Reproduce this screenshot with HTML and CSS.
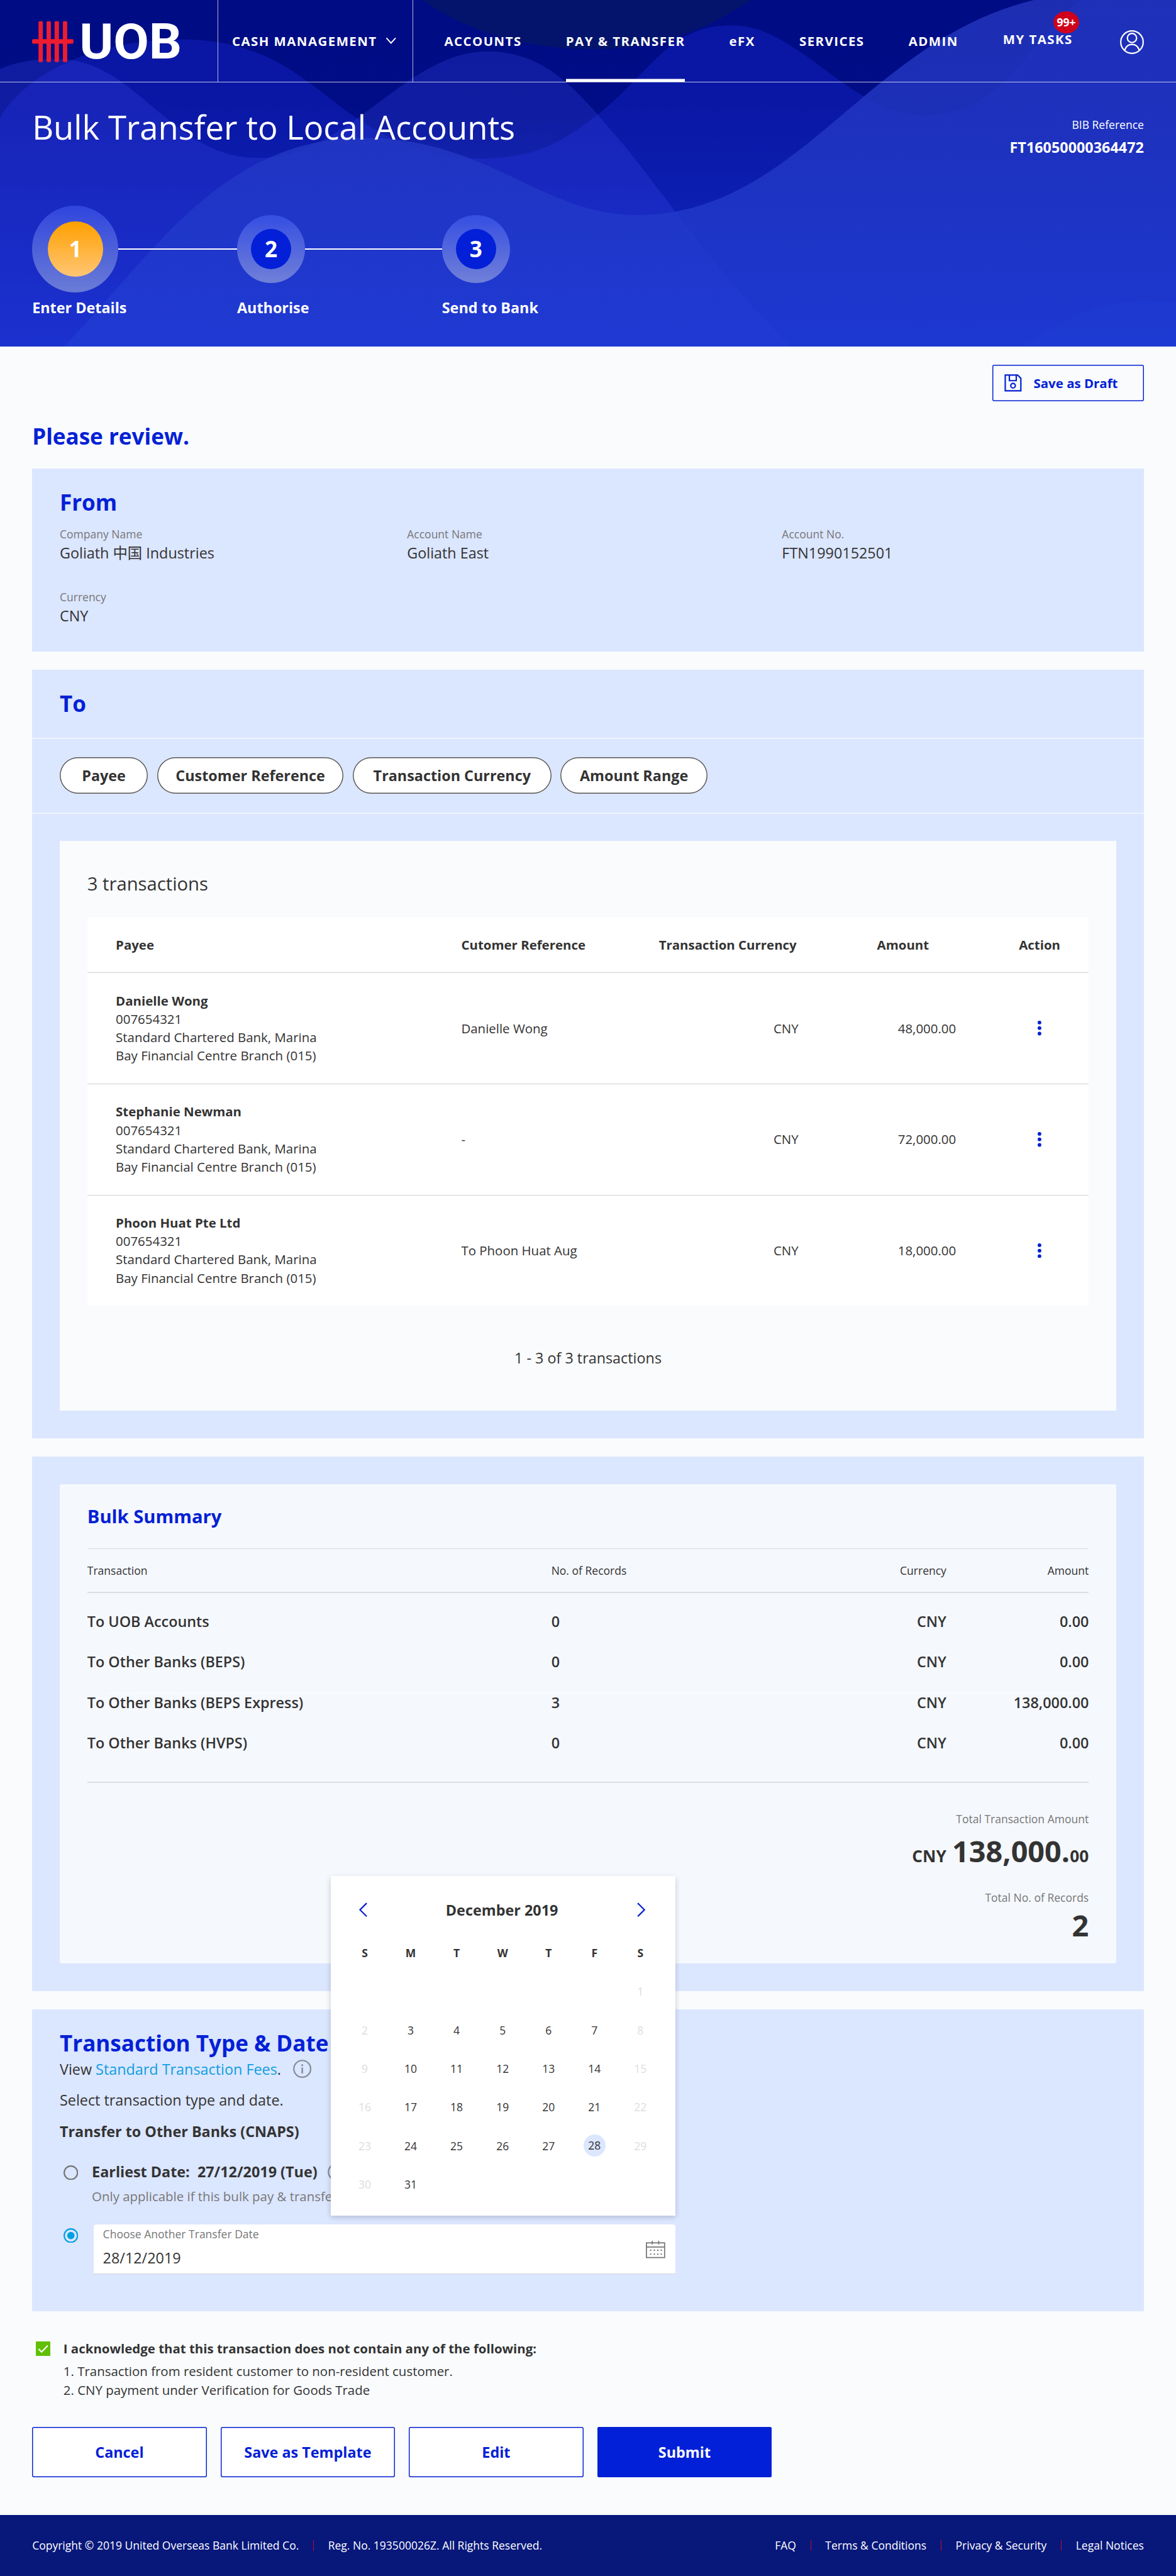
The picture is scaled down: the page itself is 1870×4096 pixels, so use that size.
FILE: index.html
```html
<!DOCTYPE html>
<html lang="en">
<head>
<meta charset="utf-8">
<title>UOB – Bulk Transfer to Local Accounts</title>
<link rel="stylesheet" href="styles.css">
</head>
<body>
<header class="hero">
  <svg class="hero-waves" viewBox="0 0 2560 754" preserveAspectRatio="none" aria-hidden="true">
    <defs>
      <linearGradient id="base" x1="0" y1="0" x2="0" y2="1"><stop offset="0" stop-color="#000c84"/><stop offset=".3" stop-color="#000d86"/><stop offset="1" stop-color="#0a2abc"/></linearGradient>
      <linearGradient id="crest" gradientUnits="userSpaceOnUse" x1="0" y1="0" x2="0" y2="754"><stop offset="0" stop-color="#2436be"/><stop offset=".5" stop-color="#2238c6"/><stop offset="1" stop-color="#203cd4"/></linearGradient>
    </defs>
    <rect width="2560" height="754" fill="url(#base)"/>
    <path d="M920 0C1020 70 1140 107 1297 107C1420 107 1530 70 1635 0Z" fill="#04146c"/>
    <path d="M0 257C40 180 180 86 392 86C530 86 610 130 700 200C800 280 900 345 1045 345C1160 345 1220 310 1285 262C1420 160 1450 55 1594 55C1740 55 1850 251 2015 251C2170 251 2230 110 2349 0H2560V754H0Z" fill="#1928d2" fill-opacity=".4"/>
    <path d="M0 150C40 133 80 128 122 128C300 128 370 344 563 344C760 344 880 112 1061 112C1200 112 1270 215 1362 320C1480 470 1560 590 1720 754H0Z" fill="#3c48f0" fill-opacity=".26"/>
    <path d="M139 754C330 560 480 300 792 300C1060 300 1180 468 1386 468C1740 468 1880 90 2251 0H2560V754Z" fill="url(#crest)" fill-opacity=".8"/>
    <path d="M2227 754C2320 690 2400 654 2488 654Q2525 654 2560 660V754Z" fill="#2446e0" fill-opacity=".12"/>
  </svg>

  <nav class="nav">
    <a class="nav-logo" href="#" aria-label="UOB">
      <svg viewBox="0 0 330 92" class="logo">
        <g fill="#ed1c2e">
          <rect x="14" y="1" width="9.5" height="89" rx="2.5"/><rect x="31.5" y="1" width="9.5" height="89" rx="2.5"/><rect x="49" y="1" width="9.5" height="89" rx="2.5"/><rect x="67" y="1" width="9.5" height="89" rx="2.5"/>
          <rect x="0" y="40" width="90" height="10" rx="2.5"/>
        </g>
        <text x="103" y="82" class="logo-text" textLength="223" lengthAdjust="spacingAndGlyphs">UOB</text>
      </svg>
    </a>
    <a class="nav-group" href="#">CASH MANAGEMENT
      <svg class="chevron" viewBox="0 0 24 16"><path d="M2 2l10 11L22 2" fill="none" stroke="#fff" stroke-width="2.6"/></svg>
    </a>
    <div class="nav-items">
      <a href="#">ACCOUNTS</a>
      <a href="#" class="is-active">PAY &amp; TRANSFER</a>
      <a href="#">eFX</a>
      <a href="#">SERVICES</a>
      <a href="#">ADMIN</a>
      <a href="#" class="tasks">MY TASKS<span class="badge">99+</span></a>
      <svg class="avatar" viewBox="0 0 52 52"><g fill="none" stroke="#fff" stroke-width="3"><circle cx="26" cy="26" r="24.4"/><circle cx="26" cy="17" r="10"/><path d="M10 43.5C13 35 19 31 26 31s13 4 16 12.500"/></g></svg>
    </div>
  </nav>

  <div class="hero-head">
    <h1>Bulk Transfer to Local Accounts</h1>
    <div class="reference">
      <span class="reference-label">BIB Reference</span>
      <strong class="reference-value">FT16050000364472</strong>
    </div>
  </div>

  <ol class="steps">
    <li class="step is-current">
      <div class="step-track"><span class="step-ring"><b>1</b></span><i></i></div>
      <span class="step-label">Enter Details</span>
    </li>
    <li class="step">
      <div class="step-track"><span class="step-ring"><b>2</b></span><i></i></div>
      <span class="step-label">Authorise</span>
    </li>
    <li class="step">
      <div class="step-track"><span class="step-ring"><b>3</b></span></div>
      <span class="step-label">Send to Bank</span>
    </li>
  </ol>
</header>

<main class="page">
  <div class="toolbar">
    <button class="draft">
      <svg class="draft-icon" viewBox="0 0 38 38"><g fill="none" stroke="#0420d0" stroke-width="3"><path d="M2 2h27l7 7v27H2z"/><path d="M11 2v12h15V2"/><circle cx="19" cy="25" r="5"/></g></svg>
      <span>Save as Draft</span>
    </button>
  </div>

  <h2 class="review">Please review.</h2>

  <section class="card from">
    <h2>From</h2>
    <dl class="from-grid">
      <div><dt>Company Name</dt><dd>Goliath 中国 Industries</dd></div>
      <div><dt>Account Name</dt><dd>Goliath East</dd></div>
      <div><dt>Account No.</dt><dd>FTN1990152501</dd></div>
      <div><dt>Currency</dt><dd>CNY</dd></div>
    </dl>
  </section>

  <section class="card to">
    <div class="to-head"><h2>To</h2></div>
    <div class="filters">
      <button class="pill pill-payee">Payee</button>
      <button class="pill pill-reference">Customer Reference</button>
      <button class="pill pill-currency">Transaction Currency</button>
      <button class="pill pill-amount">Amount Range</button>
    </div>
    <div class="panel">
      <h3>3 transactions</h3>
      <div class="table">
        <div class="table-row table-head">
          <span>Payee</span><span>Cutomer Reference</span><span class="num">Transaction Currency</span><span class="num">Amount</span><span class="action">Action</span>
        </div>
        <div class="table-row">
          <p><b>Danielle Wong</b><br>007654321<br>Standard Chartered Bank, Marina<br>Bay Financial Centre Branch (015)</p>
          <span>Danielle Wong</span><span class="num">CNY</span><span class="num">48,000.00</span>
          <span class="action"><svg class="dots" viewBox="0 0 8 32"><circle cx="4" cy="4" r="4"/><circle cx="4" cy="16" r="4"/><circle cx="4" cy="28" r="4"/></svg></span>
        </div>
        <div class="table-row">
          <p><b>Stephanie Newman</b><br>007654321<br>Standard Chartered Bank, Marina<br>Bay Financial Centre Branch (015)</p>
          <span>-</span><span class="num">CNY</span><span class="num">72,000.00</span>
          <span class="action"><svg class="dots" viewBox="0 0 8 32"><circle cx="4" cy="4" r="4"/><circle cx="4" cy="16" r="4"/><circle cx="4" cy="28" r="4"/></svg></span>
        </div>
        <div class="table-row">
          <p><b>Phoon Huat Pte Ltd</b><br>007654321<br>Standard Chartered Bank, Marina<br>Bay Financial Centre Branch (015)</p>
          <span>To Phoon Huat Aug</span><span class="num">CNY</span><span class="num">18,000.00</span>
          <span class="action"><svg class="dots" viewBox="0 0 8 32"><circle cx="4" cy="4" r="4"/><circle cx="4" cy="16" r="4"/><circle cx="4" cy="28" r="4"/></svg></span>
        </div>
      </div>
      <p class="pager">1 - 3 of 3 transactions</p>
    </div>
  </section>

  <section class="card summary">
    <div class="summary-panel">
      <h3>Bulk Summary</h3>
      <div class="summary-head summary-row"><span>Transaction</span><span>No. of Records</span><span class="num">Currency</span><span class="num">Amount</span></div>
      <div class="summary-body">
        <div class="summary-row"><span>To UOB Accounts</span><span>0</span><span class="num">CNY</span><span class="num">0.00</span></div>
        <div class="summary-row"><span>To Other Banks (BEPS)</span><span>0</span><span class="num">CNY</span><span class="num">0.00</span></div>
        <div class="summary-row is-ruled"><span>To Other Banks (BEPS Express)</span><span>3</span><span class="num">CNY</span><span class="num">138,000.00</span></div>
        <div class="summary-row"><span>To Other Banks (HVPS)</span><span>0</span><span class="num">CNY</span><span class="num">0.00</span></div>
      </div>
      <div class="totals">
        <span class="totals-label">Total Transaction Amount</span>
        <p class="totals-amount"><small>CNY</small> <span>138,000.</span><small>00</small></p>
        <span class="totals-label totals-label-records">Total No. of Records</span>
        <p class="totals-amount"><span>2</span></p>
      </div>
    </div>
  </section>

  <section class="card schedule">
    <h2>Transaction Type &amp; Date</h2>
    <div class="fees">
      <p>View <a href="#">Standard Transaction Fees</a>.</p>
      <svg class="info" viewBox="0 0 40 40"><circle cx="20" cy="20" r="18.300" fill="none" stroke="#858b98" stroke-width="3"/><path d="M20 17v13M20 10v4" stroke="#858b98" stroke-width="3.400"/></svg>
    </div>
    <p class="prompt">Select transaction type and date.</p>
    <p class="method">Transfer to Other Banks (CNAPS)</p>
    <div class="option">
      <svg class="radio" viewBox="0 0 32 32"><circle cx="16" cy="16" r="14.500" fill="none" stroke="#757575" stroke-width="3"/></svg>
      <div>
        <div class="option-title">
          <p>Earliest Date:&nbsp; 27/12/2019 (Tue)</p>
          <svg class="info" viewBox="0 0 40 40"><circle cx="20" cy="20" r="18.300" fill="none" stroke="#858b98" stroke-width="3"/></svg>
        </div>
        <p class="option-help">Only applicable if this bulk pay &amp; transfer</p>
      </div>
    </div>
    <div class="option option-date">
      <svg class="radio" viewBox="0 0 32 32"><circle cx="16" cy="16" r="14.500" fill="none" stroke="#009fe3" stroke-width="3"/><circle cx="16" cy="16" r="8" fill="#009fe3"/></svg>
      <div class="date-field">
        <div class="date-text">
          <span class="date-label">Choose Another Transfer Date</span>
          <span class="date-value">28/12/2019</span>
        </div>
        <svg class="date-icon" viewBox="0 0 42 38"><g fill="none" stroke="#757575" stroke-width="2.400"><rect x="1.200" y="4.500" width="39.600" height="32"/><path d="M1 13.500h40M14 0v8M28 0v8"/></g><g stroke="#757575" stroke-width="2.800"><path d="M9 20.500h3M17 20.500h3M24.500 20.500h3M32 20.500h3M9 29h3M17 29h3M24.500 29h3M32 29h3"/></g></svg>

        <div class="calendar">
          <div class="calendar-head">
            <svg viewBox="0 0 18 32"><path d="M16.500 1.500L2 16l14.500 14.500" fill="none" stroke="#0420d0" stroke-width="3"/></svg>
            <b>December 2019</b>
            <svg viewBox="0 0 18 32"><path d="M1.500 1.500L16 16L1.500 30.500" fill="none" stroke="#0420d0" stroke-width="3"/></svg>
          </div>
          <div class="calendar-grid">
            <b>S</b><b>M</b><b>T</b><b>W</b><b>T</b><b>F</b><b>S</b>
            <span></span><span></span><span></span><span></span><span></span><span></span><span class="off">1</span>
            <span class="off">2</span><span>3</span><span>4</span><span>5</span><span>6</span><span>7</span><span class="off">8</span>
            <span class="off">9</span><span>10</span><span>11</span><span>12</span><span>13</span><span>14</span><span class="off">15</span>
            <span class="off">16</span><span>17</span><span>18</span><span>19</span><span>20</span><span>21</span><span class="off">22</span>
            <span class="off">23</span><span>24</span><span>25</span><span>26</span><span>27</span><span><em>28</em></span><span class="off">29</span>
            <span class="off">30</span><span>31</span>
          </div>
        </div>
      </div>
    </div>
  </section>

  <div class="ack">
    <svg class="checkbox" viewBox="0 0 32 32"><rect width="32" height="32" rx="1.500" fill="#62bf04"/><path d="M6 16.500l6.500 6.500L26 9" fill="none" stroke="#fff" stroke-width="2.800"/></svg>
    <div>
      <p class="ack-title">I acknowledge that this transaction does not contain any of the following:</p>
      <p>1. Transaction from resident customer to non-resident customer.</p>
      <p>2. CNY payment under Verification for Goods Trade</p>
    </div>
  </div>

  <div class="actions">
    <button>Cancel</button>
    <button>Save as Template</button>
    <button>Edit</button>
    <button class="primary">Submit</button>
  </div>
</main>

<footer class="footer">
  <div class="footer-group"><span>Copyright © 2019 United Overseas Bank Limited Co.</span><span>Reg. No. 193500026Z. All Rights Reserved.</span></div>
  <div class="footer-group"><span>FAQ</span><span>Terms &amp; Conditions</span><span>Privacy &amp; Security</span><span>Legal Notices</span></div>
</footer>
</body>
</html>
```

FILE: styles.css
```css
*, *::before, *::after { box-sizing: border-box; }

html { font-size: 7.3055px; }

body {
  margin: 0;
  background: #f9fbfd;
  color: #333;
  font-family: "Open Sans", "Noto Sans CJK SC", sans-serif;
  font-size: 3.2rem;
  line-height: 4.4rem;
  overflow-x: hidden;
}

h1, h2, h3, p, dl, dd, ol { margin: 0; padding: 0; }
a { color: inherit; text-decoration: none; }
button { font: inherit; color: inherit; padding: 0; margin: 0; border: 0; cursor: pointer; }
svg { display: block; flex: none; }

h2 {
  color: #0220d6;
  font-size: 4.8rem;
  line-height: 6.6rem;
  font-weight: 700;
}

/* Hero */
.hero {
  position: relative;
  height: 75.4rem;
  color: #fff;
  background: #000c84;
}
.hero-waves { position: absolute; inset: 0; width: 100%; height: 100%; }

.nav {
  position: relative;
  display: flex;
  height: 18rem;
  border-bottom: .2rem solid rgba(255, 255, 255, .72);
  font-size: 2.8rem;
  line-height: 4rem;
  font-weight: 700;
  letter-spacing: .2rem;
}
.nav-logo {
  width: 47.5rem;
  padding: 4.5rem 0 0 7rem;
  border-right: .2rem solid rgba(255, 255, 255, .68);
}
.logo { width: 33rem; height: 9.2rem; overflow: visible; }
.logo-text { font-family: Roboto, sans-serif; font-weight: 700; font-size: 106px; letter-spacing: 0; fill: #fff; }
.nav-group {
  width: 42.4rem;
  padding-left: 3rem;
  display: flex;
  align-items: center;
  gap: 1.8rem;
  border-right: .2rem solid rgba(255, 255, 255, .68);
}
.chevron { width: 2.4rem; height: 1.6rem; }
.nav-items {
  flex: 1;
  display: flex;
  align-items: stretch;
  gap: 9.6rem;
  padding: 0 7rem 0 6.8rem;
}
.nav-items a { display: flex; align-items: center; white-space: nowrap; }
.nav-items .is-active { box-shadow: inset 0 -.6rem #fff; }
.nav-items .tasks { position: relative; margin-left: .1rem; padding-bottom: .8rem; }
.badge {
  position: absolute;
  top: 2.4rem;
  right: -1.4rem;
  width: 5.6rem;
  height: 4.8rem;
  border-radius: 50%;
  background: #d0021b;
  font-size: 2.4rem;
  line-height: 4.8rem;
  letter-spacing: 0;
  text-align: center;
}
.avatar { width: 5.2rem; height: 5.2rem; margin: 6.6rem 0 0 auto; }

.hero-head {
  position: relative;
  display: flex;
  justify-content: space-between;
  height: 26.8rem;
  padding: 4.7rem 7rem 0;
}
h1 { font-size: 7.2rem; line-height: 9.9rem; font-weight: 400; }
.reference { display: flex; flex-direction: column; align-items: flex-end; gap: 1rem; padding-top: 2.7rem; }
.reference-label { font-size: 2.4rem; line-height: 3.4rem; }
.reference-value { font-size: 3.2rem; line-height: 4.4rem; }

.steps {
  position: relative;
  display: grid;
  grid-template-columns: 44.6rem 44.6rem 44.6rem;
  padding-left: 7rem;
  list-style: none;
}
.step { display: flex; flex-direction: column; gap: 1.2rem; }
.step-track { display: flex; align-items: center; height: 18.8rem; }
.step-track i { flex: 1; height: .2rem; background: #fff; }
.step-ring {
  display: grid;
  place-items: center;
  width: 14.8rem;
  height: 14.8rem;
  border-radius: 50%;
  background: linear-gradient(#364ee2, #7080d8);
}
.step-ring b {
  width: 8.8rem;
  height: 8.8rem;
  border-radius: 50%;
  background: #0320d8;
  font-size: 4.8rem;
  line-height: 8.8rem;
  text-align: center;
}
.is-current .step-ring { width: 18.8rem; height: 18.8rem; background: linear-gradient(#2f45dd, #6b7cd6); }
.is-current .step-ring b { width: 12rem; height: 12rem; line-height: 12rem; background: linear-gradient(#ffa000, #ffc674); }
.step-label { font-weight: 700; }

/* Page */
.page { padding: 4rem 7rem 8.2rem; }
.toolbar { display: flex; justify-content: flex-end; }
.draft {
  display: flex;
  align-items: center;
  gap: 2.6rem;
  width: 33rem;
  height: 8rem;
  padding-left: 2.6rem;
  box-shadow: inset 0 0 0 .2rem #0420d0;
  border-radius: .4rem;
  background: none;
  color: #0220d6;
  font-size: 2.8rem;
  font-weight: 700;
}
.draft-icon { width: 3.8rem; height: 3.8rem; }
.review { margin: 4.25rem 0 3.75rem; }

.card { background: #dbe6ff; margin-bottom: 4rem; }

.from { height: 39.8rem; padding: 4.15rem 6rem 0; }
.from-grid {
  display: grid;
  grid-template-columns: 75.6rem 81.6rem 1fr;
  row-gap: 5.6rem;
  margin-top: 1.85rem;
}
dt { color: #777; font-size: 2.4rem; line-height: 3.4rem; margin-bottom: .2rem; }
dd { height: 4.4rem; }

.to-head { height: 15.1rem; padding: 4.15rem 6rem 0; border-bottom: .4rem solid #eef4fe; }
.filters {
  display: flex;
  gap: 2rem;
  height: 16.2rem;
  padding: 3.9rem 6rem 0;
  border-bottom: .4rem solid #eef4fe;
}
.pill {
  height: 8rem;
  box-shadow: inset 0 0 0 .2rem #555;
  border-radius: 4rem;
  background: #fff;
  font-weight: 700;
  white-space: nowrap;
}
.pill-payee { width: 19.2rem; }
.pill-reference { width: 40.6rem; }
.pill-currency { width: 43.2rem; }
.pill-amount { width: 32rem; }

.to { display: flow-root; padding-bottom: 6rem; }
.panel { height: 124rem; margin: 5.9rem 6rem 0; padding: 6.75rem 6rem 0; background: #f9fbfd; }
.panel h3 { font-size: 4rem; line-height: 5.4rem; font-weight: 400; margin-bottom: 4.45rem; }
.table { background: #fff; font-size: 2.8rem; line-height: 4rem; }
.table-row {
  display: grid;
  grid-template-columns: 75.2rem 39.6rem 33.8rem 34.3rem 1fr;
  align-items: center;
  height: 24.2rem;
  padding-left: 6.2rem;
  border-bottom: .2rem solid #d0d0d0;
}
.table-row:last-child { height: 24rem; border-bottom: 0; }
.table-head { height: 12.2rem; font-weight: 700; }
.table-head .num:nth-child(3) { padding-right: .4rem; }
.table-head .num:nth-child(4) { padding-right: 5.9rem; }
.num { text-align: right; }
.action { display: flex; justify-content: center; padding-left: 7.5rem; }
.dots { width: .8rem; height: 3.2rem; fill: #0420d0; }
.pager { margin-top: 9.2rem; text-align: center; }

/* Bulk summary */
.summary { padding: 6rem; }
.summary-panel { height: 104.4rem; padding: 4.4rem 6rem 0; background: #f5f8fd; border-radius: .4rem; }
.summary-panel h3 { color: #0220d6; font-size: 4rem; line-height: 5.4rem; margin-bottom: 4.2rem; }
.summary-row {
  display: grid;
  grid-template-columns: 101rem 55rem 31rem 31rem;
  align-items: center;
  height: 8.8rem;
}
.summary-head {
  height: 9.8rem;
  border-top: .2rem solid #d6d9de;
  border-bottom: .3rem solid #dcdee2;
  font-size: 2.4rem;
}
.summary-body {
  height: 41.3rem;
  padding-top: 1.7rem;
  border-bottom: .3rem solid #dcdee2;
  font-weight: 600;
}
.is-ruled { position: relative; }
.is-ruled::before {
  content: "";
  position: absolute;
  top: 2.4rem;
  left: 4.5rem;
  right: 1.7rem;
  height: .2rem;
  background: #fff;
  z-index: 0;
}
.is-ruled span { position: relative; }
.totals { display: flex; flex-direction: column; align-items: flex-end; padding-top: 6.1rem; }
.totals-label { color: #777; font-size: 2.4rem; line-height: 3.4rem; }
.totals-label-records { margin-top: 4rem; }
.totals-amount { height: 8.8rem; font-size: 6.4rem; line-height: 8.8rem; font-weight: 700; white-space: nowrap; }
.totals-label:first-child + .totals-amount { margin-top: .9rem; }
.totals-amount small { font-size: 3.6rem; line-height: 1; }
.totals-amount small:first-child { margin-right: -.4rem; }

/* Transaction type and date */
.schedule { height: 65.6rem; padding: 4.1rem 6rem 0; margin-bottom: 0; }
.fees { display: flex; align-items: center; gap: 2.6rem; }
.fees a { color: #109fe0; }
.info { width: 4rem; height: 4rem; }
.prompt { margin-top: 2.4rem; }
.method { margin-top: 2.4rem; font-weight: 700; }
.option { display: flex; margin-top: 4.4rem; padding-left: .8rem; }
.radio { width: 3.2rem; height: 3.2rem; margin: .8rem 3rem 0 0; }
.option-title { display: flex; align-items: center; gap: 2.3rem; font-weight: 700; }
.option-help { margin-top: 1.3rem; color: #777; font-size: 2.8rem; line-height: 3.8rem; }
.option-date { margin-top: 4.2rem; }
.option-date .radio { margin-right: 3.4rem; }
.date-field {
  position: relative;
  display: flex;
  justify-content: space-between;
  width: 126.6rem;
  height: 10.8rem;
  padding: .4rem 2.2rem 0 2rem;
  border-bottom: .2rem solid #d4d4d4;
  border-radius: .6rem .6rem 0 0;
  background: #fff;
}
.date-text { display: flex; flex-direction: column; }
.date-label { color: #777; font-size: 2.4rem; line-height: 3.4rem; }
.date-value { margin-top: 1.2rem; }
.date-icon { width: 4.2rem; height: 3.8rem; margin-top: 3.2rem; }

.calendar {
  position: absolute;
  right: 0;
  bottom: calc(100% + 2rem);
  width: 75rem;
  height: 73.8rem;
  padding: 2.2rem 2.6rem 0 2.4rem;
  background: #fff;
  box-shadow: 0 .4rem 1.2rem rgba(0, 0, 0, .2);
}
.calendar-head { display: flex; align-items: center; justify-content: space-between; height: 10.25rem; padding: 0 4rem 0 3.7rem; }
.calendar-head svg { width: 1.8rem; height: 3.2rem; }
.calendar-grid {
  display: grid;
  grid-template-columns: repeat(7, 10rem);
  grid-auto-rows: 8.4rem;
  place-items: center;
  font-size: 2.4rem;
}
.calendar-grid .off { color: #ddd; }
.calendar-grid em {
  display: block;
  width: 4.8rem;
  height: 4.8rem;
  border-radius: 50%;
  background: #dbe6ff;
  font-style: normal;
  line-height: 4.8rem;
  text-align: center;
}

/* Acknowledgement and actions */
.ack { display: flex; gap: 2.8rem; padding: 6.2rem 0 0 .8rem; font-size: 2.8rem; line-height: 4rem; }
.checkbox { width: 3.2rem; height: 3.2rem; margin-top: .4rem; }
.ack-title { font-weight: 700; margin-bottom: 1rem; }
.actions { display: flex; gap: 3rem; margin-top: 6rem; }
.actions button {
  width: 38rem;
  height: 11rem;
  box-shadow: inset 0 0 0 .2rem #0420d0;
  border-radius: .4rem;
  background: #fff;
  color: #0220d6;
  font-weight: 700;
}
.actions .primary { background: #0220d8; color: #fff; }

.footer {
  display: flex;
  justify-content: space-between;
  align-items: center;
  height: 13.3rem;
  padding: 0 7rem;
  background: #08177a;
  color: #fff;
  font-size: 2.4rem;
  line-height: 3.4rem;
}
.footer-group { display: flex; align-items: center; }
.footer-group span + span { display: flex; align-items: center; }
.footer-group span + span::before {
  content: "";
  width: .15rem;
  min-width: 1px;
  height: 2.4rem;
  margin: 0 3.1rem;
  background: #c00a2c;
}
```
